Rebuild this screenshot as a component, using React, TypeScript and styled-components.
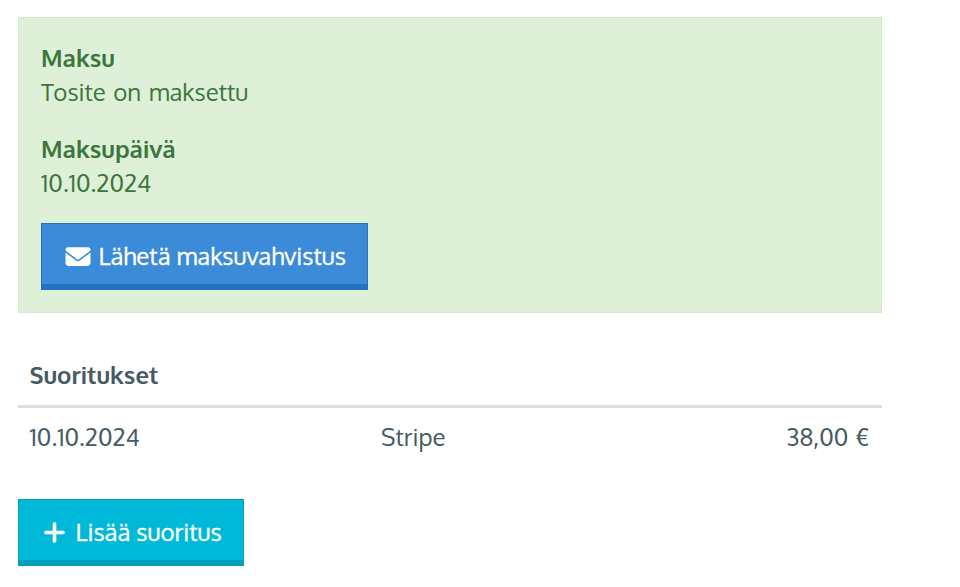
import React from "react";
import styled, { createGlobalStyle } from "styled-components";
import { FaEnvelope, FaPlus } from "react-icons/fa6";

const GlobalStyle = createGlobalStyle`
  * { box-sizing: border-box; }
  body {
    margin: 0;
    background: #fff;
    color: #455a64;
    font: 400 24px/34px Oxygen, "Noto Sans", sans-serif;
  }
`;

const Page = styled.main`
  width: 882px;
  padding: 17px 0 0 18px;
`;

const Alert = styled.section`
  height: 296px;
  padding: 23px 22px 0;
  border: 1px solid #d0e9c6;
  background: #dff0d8;
  color: #3c763d;
`;

const Field = styled.dl`
  margin: 0 0 23px;
`;

const Term = styled.dt`
  font-weight: 700;
`;

const Value = styled.dd`
  margin: 0;
  word-spacing: 1.5px;
`;

const Button = styled.button<{ $tone: "blue" | "cyan"; $width: number }>`
  display: flex;
  align-items: center;
  width: ${(p) => p.$width}px;
  height: 67px;
  padding: 0 0 0 23px;
  border: 1px solid ${(p) => (p.$tone === "blue" ? "#2672c0" : "#00a0ba")};
  border-bottom-width: 6px;
  background: ${(p) => (p.$tone === "blue" ? "#3c8bd9" : "#00b8d8")};
  color: #fff;
  font: inherit;
  white-space: nowrap;

  svg {
    flex: none;
    width: 25px;
    height: 25px;
    margin-top: 4px;
    overflow: visible;
  }
`;

const EnvelopeIcon = styled(FaEnvelope)`
  transform: translateX(0.5px);
`;

const PlusIcon = styled(FaPlus)`
  stroke: currentColor;
  stroke-width: 10px;
`;

const Label = styled.span`
  margin: 4px 0 0 8.5px;
  -webkit-text-stroke: 0.3px currentColor;
`;

const Payments = styled.table`
  width: 864px;
  margin: 34px 0 31px;
  border-collapse: separate;
  border-spacing: 0;
  table-layout: fixed;
`;

const Heading = styled.th`
  height: 61px;
  padding: 0 11.5px 3px;
  border-bottom: 3px solid #ddd;
  text-align: left;
  font-weight: 700;
`;

const Cell = styled.td<{ $right?: boolean }>`
  height: 60px;
  padding: 0 ${(p) => (p.$right ? 12.5 : 11)}px 2px 11px;
  text-align: ${(p) => (p.$right ? "right" : "left")};
  word-spacing: 1px;

  &:first-child { padding-left: 11.5px; }
`;

const Column = styled.col<{ $width: number }>`
  width: ${(p) => p.$width}px;
`;

export default function App() {
  return (
    <Page>
      <GlobalStyle />
      <Alert>
        <Field>
          <Term>Maksu</Term>
          <Value>Tosite on maksettu</Value>
        </Field>
        <Field>
          <Term>Maksupäivä</Term>
          <Value>10.10.2024</Value>
        </Field>
        <Button $tone="blue" $width={327}>
          <EnvelopeIcon />
          <Label>Lähetä maksuvahvistus</Label>
        </Button>
      </Alert>
      <Payments>
        <colgroup>
          <Column $width={352} />
          <Column $width={256} />
          <Column $width={256} />
        </colgroup>
        <thead>
          <tr><Heading colSpan={3}>Suoritukset</Heading></tr>
        </thead>
        <tbody>
          <tr>
            <Cell>10.10.2024</Cell>
            <Cell>Stripe</Cell>
            <Cell $right>38,00 €</Cell>
          </tr>
        </tbody>
      </Payments>
      <Button $tone="cyan" $width={226}>
        <PlusIcon />
        <Label>Lisää suoritus</Label>
      </Button>
    </Page>
  );
}
